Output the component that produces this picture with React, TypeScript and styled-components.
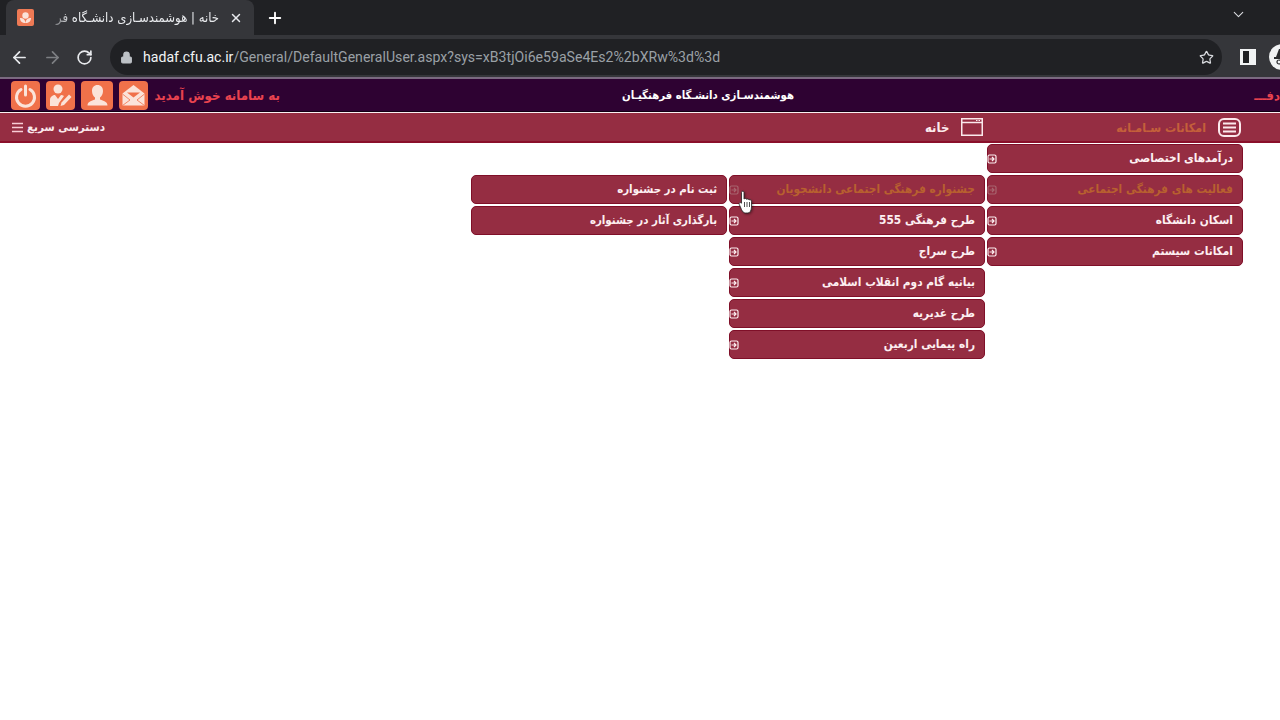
import React from 'react'
import styled, { createGlobalStyle } from 'styled-components'
import { ArrowLeft, ArrowRight, RotateCw, Lock, Star, X, Plus, ChevronDown } from 'lucide-react'

const GlobalStyle = createGlobalStyle`
  html, body {
    margin: 0;
    height: 100%;
    background: #FFF;
    overflow: hidden;
  }
  body {
    font-family: "DejaVu Sans Condensed", "DejaVu Sans", sans-serif;
  }
`

const Page = styled.div`
  position: relative;
  width: 1280px;
  height: 720px;
  overflow: hidden;
`

const TabStrip = styled.div`
  height: 35px;
  background: #202124;
  display: flex;
  align-items: center;
  padding-left: 6px;
  box-sizing: border-box;
`

const Tab = styled.div`
  width: 248px;
  height: 35px;
  background: #35363A;
  border-radius: 8px 8px 0 0;
  display: flex;
  align-items: center;
  box-sizing: border-box;
  padding: 0 11px 0 11px;
`

const Favicon = styled.div`
  width: 17px;
  height: 17px;
  background: #EE7A55;
  border-radius: 2px;
  display: flex;
  align-items: center;
  justify-content: center;
  flex-shrink: 0;
`

const TabTitle = styled.div`
  flex: 1;
  margin: 0 10px 0 11px;
  color: #E8EAED;
  font-size: 13px;
  white-space: nowrap;
  direction: rtl;
  text-align: right;
  mask-image: linear-gradient(to right, transparent 0, #000 26px);
`

const NewTab = styled.div`
  color: #FFF;
  display: flex;
  margin-left: 12px;
`

const TabMenu = styled.div`
  color: #DADCE0;
  display: flex;
  margin-left: auto;
  margin-right: 33px;
  margin-top: -6px;
`

const Toolbar = styled.div`
  height: 42px;
  background: #35363A;
  display: flex;
  align-items: center;
  box-sizing: border-box;
  padding: 2px 0 0 10px;
`

const NavButton = styled.div<{ dim?: boolean }>`
  width: 33px;
  flex-shrink: 0;
  display: flex;
  color: ${props => props.dim ? '#7D7F83' : '#E8EAED'};
`

const AddressBar = styled.div`
  width: 1112px;
  height: 36px;
  margin-left: 1px;
  background: #202124;
  border-radius: 18px;
  display: flex;
  align-items: center;
  box-sizing: border-box;
  padding: 0 8px 0 10px;
  flex-shrink: 0;
`

const Url = styled.div`
  margin-left: 10px;
  font-family: "Roboto", "Liberation Sans", sans-serif;
  font-size: 14.1px;
  color: #9AA0A6;
  white-space: nowrap;

  b {
    color: #F1F3F4;
    font-weight: 400;
  }
`

const StarWrap = styled.div`
  margin-left: auto;
  color: #DADCE0;
  display: flex;
`

const PanelIcon = styled.div`
  width: 16px;
  height: 16px;
  margin-left: 18px;
  background: #F1F3F4;
  box-sizing: border-box;
  padding: 2px 7px 2px 3px;
  flex-shrink: 0;

  &::after {
    content: '';
    display: block;
    width: 100%;
    height: 100%;
    background: #202124;
  }
`

const Avatar = styled.div`
  width: 26px;
  height: 26px;
  margin-left: 13px;
  border-radius: 50%;
  background: #F1F3F4;
  flex-shrink: 0;
  display: flex;
  align-items: center;
  justify-content: center;
  overflow: hidden;
`

const Divider = styled.div`
  height: 2px;
  background: #7A6A80;
`

const TopBar = styled.div`
  height: 33px;
  background: #2E0232;
  display: flex;
  align-items: center;
  box-sizing: border-box;
  padding-left: 11px;
  border-bottom: 1px solid #120014;
`

const Tiles = styled.div`
  display: flex;
  gap: 6px;
`

const Tile = styled.div<{ wide?: boolean }>`
  width: ${props => props.wide ? '32px' : '29px'};
  height: 29px;
  background: #F0714A;
  border-radius: 4px;
  display: flex;
  align-items: center;
  justify-content: center;
`

const Welcome = styled.div`
  margin-left: 6px;
  width: 126px;
  direction: rtl;
  color: #E8434F;
  font-size: 13.2px;
  font-weight: 700;
  white-space: nowrap;
`

const SiteTitle = styled.div`
  margin-left: 342px;
  width: 172px;
  direction: rtl;
  color: #FFF;
  font-size: 11.3px;
  font-weight: 700;
  white-space: nowrap;
`

const Marquee = styled.div`
  margin-left: auto;
  width: 23px;
  direction: rtl;
  color: #E8434F;
  font-size: 13px;
  font-weight: 700;
  white-space: nowrap;
`

const NavBar = styled.div`
  height: 31px;
  background: #952D42;
  border-top: 1px solid #FBEFF1;
  border-bottom: 2px solid #8A0F2A;
  box-sizing: border-box;
  display: flex;
  align-items: center;
  padding: 0 39px 0 12px;
`

const QuickAccess = styled.div`
  display: flex;
  align-items: center;
  gap: 4px;
  color: #FBE9EC;
  font-size: 11.5px;
  font-weight: 700;
`

const NavGroup = styled.div`
  margin-left: auto;
  display: flex;
  align-items: center;
  gap: 133px;
`

const NavItem = styled.div<{ muted?: boolean }>`
  display: flex;
  align-items: center;
  gap: 12px;
  color: ${props => props.muted ? '#C4603A' : '#FBE9EC'};
  font-size: ${props => props.muted ? '12.4px' : '13px'};
  font-weight: 700;
  white-space: nowrap;
`

const MenuLayer = styled.div`
  position: absolute;
  top: 144px;
  right: 37px;
  display: flex;
  flex-direction: row-reverse;
  align-items: flex-start;
  gap: 2px;
`

const MenuColumn = styled.div<{ offset: number, small?: boolean }>`
  width: 256px;
  margin-top: ${props => props.offset}px;
  display: flex;
  flex-direction: column;
  gap: 2px;
  font-size: ${props => props.small ? '11.4px' : '11.8px'};
`

const MenuItem = styled.div<{ active?: boolean }>`
  height: 29px;
  background: #952D42;
  border: 1px solid #7F0F28;
  border-radius: 5px;
  box-sizing: border-box;
  display: flex;
  align-items: center;
  justify-content: space-between;
  padding: 0 9px 0 0;
  color: ${props => props.active ? '#B8602F' : '#FDEFF1'};
  font-weight: 700;
  white-space: nowrap;
`

const MenuText = styled.span`
  direction: rtl;
  margin-top: -1px;
`

const Cursor = styled.div`
  position: absolute;
  left: 738px;
  top: 190px;
  display: flex;
  filter: drop-shadow(1px 1px 1px rgba(0, 0, 0, .4));
`

const PlusBox = ({ active }: { active?: boolean }) => (
  <svg width="10" height="10" viewBox="0 0 10 10" fill="none" stroke={active ? '#A8656F' : '#FDEFF1'} strokeWidth="1.2" style={{ flexShrink: 0, marginLeft: -1 }}>
    <rect x="1" y="1" width="8" height="8" rx="1.5" />
    <path d="M2.5 5H7M5 3l2 2-2 2" />
  </svg>
)

const PowerIcon = () => (
  <svg width="25" height="25" viewBox="0 0 25 25" fill="none" stroke="#FBE3D9" strokeWidth="3" strokeLinecap="round">
    <path d="M8 6.5a9 9 0 1 0 9 0" />
    <path d="M12.5 3v9" />
  </svg>
)

const AgentIcon = () => (
  <svg width="25" height="25" viewBox="0 0 25 25" fill="#FBE3D9">
    <circle cx="10" cy="6" r="4.5" />
    <path d="M2 23v-6c0-3.5 3-5 5-5l3 4 3-4c1 0 2 .3 3 1l-5 7-1 3z" />
    <path d="M21 11.5l2.5 2.5-7.5 8-3.5 1 1-3.5z" />
  </svg>
)

const UserIcon = () => (
  <svg width="25" height="25" viewBox="0 0 25 25" fill="#FBE3D9">
    <path d="M12.5 2c3.5 0 5.5 2.5 5.5 6 0 3-1.5 5.5-3 6.5v2c2 1 7.5 1.500 7.5 6H2.500c0-4.500 5.500-5 7.500-6v-2C8.500 13.500 7 11 7 8c0-3.500 2-6 5.500-6z" />
  </svg>
)

const MailIcon = () => (
  <svg width="25" height="25" viewBox="0 0 25 25" fill="#FBE3D9">
    <path d="M1.5 10.5L12.5 2l11 8.5v12h-22z" />
    <path d="M6 9.5h13l-6.5 5z" fill="#F0714A" />
    <path d="M1.5 11l7.5 6-7.5 5.5M23.500 11L16 17l7.500 5.500" fill="none" stroke="#F0714A" strokeWidth=".8" />
  </svg>
)

const WindowIcon = () => (
  <svg width="22" height="18" viewBox="0 0 22 18" fill="none" stroke="#FBE9EC" strokeWidth="1.5" style={{ display: 'block' }}>
    <rect x=".75" y=".75" width="20.5" height="16.5" />
    <path d="M1 4.5h20" />
    <path d="M15 2.5h1.5M17.500 2.500H19" strokeWidth="1" />
  </svg>
)

const ListIcon = () => (
  <svg width="23" height="19" viewBox="0 0 23 19" fill="none" stroke="#FBE9EC" style={{ display: 'block' }}>
    <rect x="1" y="1" width="21" height="17" rx="5" strokeWidth="2" />
    <path d="M5 5.5h13M5 9.5h13M5 13.5h13" strokeWidth="1.8" />
  </svg>
)

const BurgerIcon = () => (
  <svg width="11" height="11" viewBox="0 0 11 11" stroke="#F9CDD6" strokeWidth="1.4" style={{ display: 'block' }}>
    <path d="M0 1.5h11M0 5.5h11M0 9.5h11" />
  </svg>
)

const FlowerIcon = () => (
  <svg width="13" height="13" viewBox="0 0 13 13" fill="#FBE3D9">
    <circle cx="6.5" cy="4.5" r="3.2" />
    <path d="M1 7c3 0 5 1 5.5 5C3 12 1 10 1 7zM12 7c-3 0-5 1-5.5 5 3.500 0 5.500-2 5.500-5z" />
  </svg>
)

const ProfileIcon = () => (
  <svg width="26" height="26" viewBox="0 0 26 26" fill="#2B2C2F">
    <path d="M7 13l3-8h6l3 8z" />
    <rect x="5" y="13" width="16" height="2" />
    <circle cx="10" cy="18" r="2" fill="none" stroke="#2B2C2F" strokeWidth="1.2" />
    <circle cx="16" cy="18" r="2" fill="none" stroke="#2B2C2F" strokeWidth="1.2" />
  </svg>
)

const HandCursor = () => (
  <svg width="16" height="25" viewBox="0 0 15 25" fill="#FFF" stroke="#222" strokeWidth=".8">
    <path d="M3 2.5c0-1.8 2.5-1.8 2.5 0V9c1-.8 2.2-.6 2.5.3 1-.6 2.100-.3 2.500.6 1-.5 2.500 0 2.500 1.400V17c0 3-1.500 6-3.500 6H7c-2 0-3-1.500-4-3.500L.8 14.500c-.7-1.500 1-2.600 2.200-1.300z" />
    <path d="M6 12v5M8.5 12v5M11 12v5" fill="none" />
  </svg>
)

const columns = [
  {
    offset: 0,
    items: [
      { label: 'درآمدهای اختصاصی' },
      { label: 'فعالیت های فرهنگی اجتماعی', active: true },
      { label: 'اسکان دانشگاه' },
      { label: 'امکانات سیستم' },
    ],
  },
  {
    offset: 31,
    items: [
      { label: 'جشنواره فرهنگی اجتماعی دانشجویان', active: true },
      { label: 'طرح فرهنگی 555' },
      { label: 'طرح سراج' },
      { label: 'بیانیه گام دوم انقلاب اسلامی' },
      { label: 'طرح غدیریه' },
      { label: 'راه پیمایی اربعین' },
    ],
  },
  {
    offset: 31,
    small: true,
    items: [
      { label: 'ثبت نام در جشنواره', leaf: true },
      { label: 'بارگذاری آثار در جشنواره', leaf: true },
    ],
  },
]

const App = () => {
  return <Page>
    <GlobalStyle />

    <TabStrip>
      <Tab>
        <Favicon><FlowerIcon /></Favicon>
        <TabTitle>خانه | هوشمندسـازی دانشـگاه فر</TabTitle>
        <X size={14} color="#E8EAED" strokeWidth={2.5} />
      </Tab>
      <NewTab><Plus size={18} strokeWidth={2.5} /></NewTab>
      <TabMenu><ChevronDown size={17} strokeWidth={1.5} /></TabMenu>
    </TabStrip>

    <Toolbar>
      <NavButton><ArrowLeft size={19} strokeWidth={2.2} /></NavButton>
      <NavButton dim><ArrowRight size={19} strokeWidth={2.2} /></NavButton>
      <NavButton><RotateCw size={17} strokeWidth={2.4} /></NavButton>
      <AddressBar>
        <Lock size={13} color="#BDC1C6" fill="#BDC1C6" />
        <Url><b>hadaf.cfu.ac.ir</b>/General/DefaultGeneralUser.aspx?sys=xB3tjOi6e59aSe4Es2%2bXRw%3d%3d</Url>
        <StarWrap><Star size={15} strokeWidth={2} /></StarWrap>
      </AddressBar>
      <PanelIcon />
      <Avatar><ProfileIcon /></Avatar>
    </Toolbar>

    <Divider />

    <TopBar>
      <Tiles>
        <Tile><PowerIcon /></Tile>
        <Tile><AgentIcon /></Tile>
        <Tile wide><UserIcon /></Tile>
        <Tile><MailIcon /></Tile>
      </Tiles>
      <Welcome>به سامانه خوش آمدید</Welcome>
      <SiteTitle>هوشمندسـازی دانشـگاه فرهنگیـان</SiteTitle>
      <Marquee>دفـــ</Marquee>
    </TopBar>

    <NavBar>
      <QuickAccess>
        <BurgerIcon />
        <span>دسترسی سریع</span>
      </QuickAccess>
      <NavGroup>
        <NavItem>
          <span>خانه</span>
          <WindowIcon />
        </NavItem>
        <NavItem muted>
          <span>امکانات سـامـانه</span>
          <ListIcon />
        </NavItem>
      </NavGroup>
    </NavBar>

    <MenuLayer>
      {columns.map((column, index) => (
        <MenuColumn key={`column${index}`} offset={column.offset} small={column.small}>
          {column.items.map((item: { label: string, active?: boolean, leaf?: boolean }, i) => (
            <MenuItem key={`item${index}${i}`} active={item.active}>
              {item.leaf ? <span /> : <PlusBox active={item.active} />}
              <MenuText>{item.label}</MenuText>
            </MenuItem>
          ))}
        </MenuColumn>
      ))}
    </MenuLayer>

    <Cursor><HandCursor /></Cursor>
  </Page>
}

export default App
